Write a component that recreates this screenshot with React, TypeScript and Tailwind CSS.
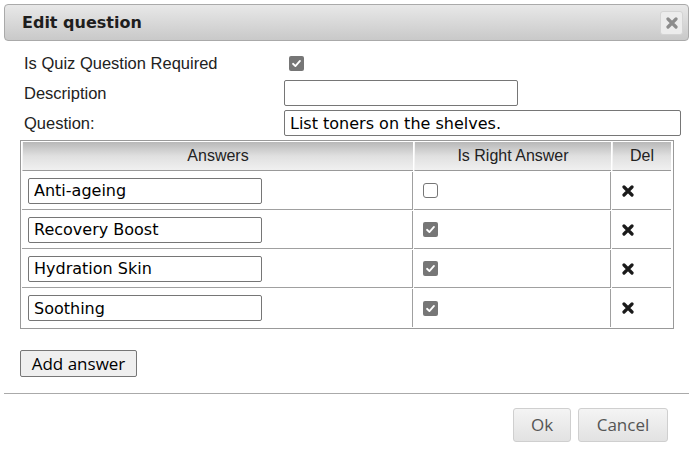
const answers = [
  { text: 'Anti-ageing', right: false },
  { text: 'Recovery Boost', right: true },
  { text: 'Hydration Skin', right: true },
  { text: 'Soothing', right: true },
];

function Check({ checked }: { checked: boolean }) {
  if (!checked) {
    return <span className="block h-[15px] w-[15px] rounded-[3px] border border-[#767676] bg-white" />;
  }
  return (
    <span className="flex h-[15px] w-[15px] items-center justify-center rounded-[2px] bg-[#767676]">
      <svg viewBox="0 0 12 12" className="h-[11px] w-[11px]">
        <path d="M2.2 6.3 L4.8 8.8 L9.8 3.2" fill="none" stroke="white" strokeWidth={2} strokeLinecap="round" strokeLinejoin="round" />
      </svg>
    </span>
  );
}

// thick fa-times style cross
function Cross({ className }: { className: string }) {
  return (
    <svg viewBox="0 0 12 12" className={className}>
      <path d="M2 2 L10 10 M10 2 L2 10" fill="none" stroke="currentColor" strokeWidth={3.2} strokeLinecap="round" />
    </svg>
  );
}

const inputCls =
  "h-[26px] rounded-[2px] border border-[#767676] bg-white px-[5px] font-['DejaVu_Sans',sans-serif] text-[16px] text-black outline-none";

export default function App() {
  return (
    <div className="h-[460px] w-[693px] overflow-hidden bg-white font-['Liberation_Sans',Arial,sans-serif] text-[16.5px] text-[#222]">
      <div className="mx-1 mt-1 flex h-[37px] items-center justify-between rounded-[4px] border border-[#aaa] bg-linear-to-b from-[#e8e8e8] to-[#c9c9c9] pl-[17px] pr-[5px]">
        <span className="font-['DejaVu_Sans',sans-serif] text-[16px] font-bold text-[#1e1e1e]">Edit question</span>
        <button className="flex h-[24px] w-[23px] items-center justify-center rounded-[3px] border border-[#d4d4d4] bg-[#ececec] text-[#8c8c8c]">
          <Cross className="h-[12px] w-[12px]" />
        </button>
      </div>

      <div className="px-5 pt-[10px]">
        <div className="grid grid-cols-[264px_1fr]">
          <div className="flex h-6 items-center pl-1">Is Quiz Question Required</div>
          <div className="flex h-6 items-center pl-[5px]">
            <Check checked />
          </div>

          <div className="mt-[5px] flex h-[26px] items-center pl-1">Description</div>
          <div className="mt-[5px] flex h-[26px] items-center">
            <input className={`${inputCls} w-[234px]`} defaultValue="" />
          </div>

          <div className="mt-1 flex h-[26px] items-center pl-1">Question:</div>
          <div className="mt-1 flex h-[26px] items-center">
            <input className={`${inputCls} w-[397px]`} defaultValue="List toners on the shelves." />
          </div>
        </div>

        <div className="mt-1 grid w-[654px] grid-cols-[391px_197px_59px] gap-px border border-[#999] p-px text-[16px]">
          {['Answers', 'Is Right Answer', 'Del'].map(h => (
            <div
              key={h}
              className="flex h-[29px] items-center justify-center border-b border-l border-b-[#999] border-l-[#f4f4f4] bg-linear-to-b from-[#b8b8b8] via-[#e0e0e0] to-[#f0f0f0] text-[#222]"
            >
              {h}
            </div>
          ))}
          {answers.map((a, i) => {
            const last = i === answers.length - 1;
            const rowB = last ? '' : 'border-b border-b-[#a0a0a0]';
            return [
              <div key={`a${i}`} className={`flex h-[38px] items-center border-r border-r-[#a0a0a0] pl-[6px] ${rowB}`}>
                <input className={`${inputCls} w-[234px]`} defaultValue={a.text} />
              </div>,
              <div key={`r${i}`} className={`flex h-[38px] items-center border-r border-r-[#a0a0a0] pl-[9px] ${rowB}`}>
                <Check checked={a.right} />
              </div>,
              <div key={`d${i}`} className={`flex h-[38px] items-center pl-[10px] text-[#1a1a1a] ${rowB}`}>
                <Cross className="h-[12px] w-[12px]" />
              </div>,
            ];
          })}
        </div>

        <button className="mt-[21px] h-[27px] w-[117px] rounded-[2px] border border-[#767676] bg-[#efefef] font-['Open_Sans',sans-serif] text-[17px] leading-none text-black">
          Add answer
        </button>
      </div>

      <div className="mx-1 mt-[16px] h-px bg-[#aaa]" />

      <div className="mt-[14px] flex justify-end gap-[7px] pr-[25px]">
        <button className="h-[34px] w-[58px] rounded-[3px] border border-[#cfcfcf] bg-linear-to-b from-[#f4f4f4] to-[#e2e2e2] font-['Open_Sans',sans-serif] text-[17px] text-[#555]">
          Ok
        </button>
        <button className="h-[34px] w-[90px] rounded-[3px] border border-[#cfcfcf] bg-linear-to-b from-[#f4f4f4] to-[#e2e2e2] font-['Open_Sans',sans-serif] text-[17px] text-[#555]">
          Cancel
        </button>
      </div>
    </div>
  );
}
